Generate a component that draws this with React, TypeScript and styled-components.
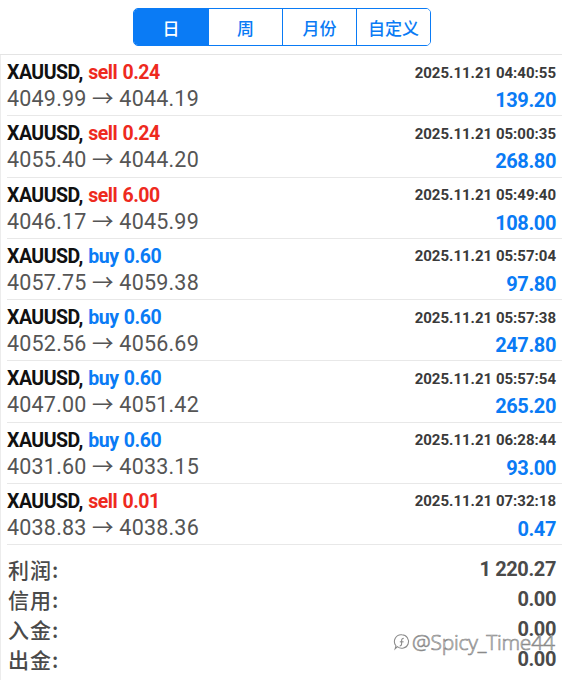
import React, { useState } from 'react'
import styled, { createGlobalStyle } from 'styled-components'

const GlobalStyle = createGlobalStyle`
  html, body {
    margin: 0;
    padding: 0;
    background: #ffffff;
  }
  body {
    font-family: Roboto, 'Noto Sans CJK SC', sans-serif;
    -webkit-font-smoothing: antialiased;
  }
`

const BLUE = '#0a7bf5'
const RED = '#ee2a1e'

const Page = styled.div`
  position: relative;
  width: 562px;
  height: 680px;
  overflow: hidden;
  background: #fff;
`

const Header = styled.header`
  height: 54px;
  display: flex;
  align-items: center;
  justify-content: center;
  border-bottom: 1px solid #e4e4e4;
  padding-left: 2px;
`

const Segmented = styled.div`
  display: grid;
  grid-template-columns: repeat(4, 1fr);
  width: 298px;
  height: 38px;
  box-sizing: border-box;
  border: 1.5px solid ${BLUE};
  border-radius: 5px;
  overflow: hidden;
`

const Segment = styled.button<{ $active: boolean }>`
  border: 0;
  border-left: 1.5px solid ${BLUE};
  &:first-child {
    border-left: 0;
  }
  padding: 0;
  margin: 0;
  background: ${(p) => (p.$active ? BLUE : '#fff')};
  color: ${(p) => (p.$active ? '#fff' : BLUE)};
  font-family: 'Noto Sans CJK SC', sans-serif;
  font-size: 17px;
  font-weight: 500;
  cursor: pointer;
`

const Body = styled.div`
  border-left: 1px solid #ececec;
`

const Row = styled.div`
  height: 61.25px;
  box-sizing: border-box;
  margin-left: 6px;
  padding: 0 6px 0 0;
  border-bottom: 1px solid #e8e8e8;
  display: grid;
  grid-template-columns: 1fr auto;
  grid-template-rows: 29px 28px;
  align-items: end;
`

const Title = styled.div`
  font-size: 19.5px;
  font-weight: 700;
  color: #111;
  letter-spacing: -0.5px;
  word-spacing: 1px;
`

const Side = styled.span<{ $sell: boolean }>`
  color: ${(p) => (p.$sell ? RED : BLUE)};
`

const Time = styled.div`
  font-size: 15px;
  font-weight: 700;
  color: #3a3a3a;
  text-align: right;
  align-self: center;
  padding-top: 6px;
`

const Prices = styled.div`
  font-size: 21.5px;
  color: #555;
  letter-spacing: 0.2px;
`

const Profit = styled.div`
  font-size: 20px;
  font-weight: 700;
  color: ${BLUE};
  text-align: right;
  letter-spacing: -0.4px;
`

const Summary = styled.div`
  padding: 9px 6px 0 7px;
`

const SumRow = styled.div`
  display: flex;
  justify-content: space-between;
  align-items: center;
  height: 30px;
  color: #4a4a4a;
`

const SumLabel = styled.span`
  font-family: 'Noto Sans CJK SC', sans-serif;
  font-size: 21px;
  font-weight: 500;
  letter-spacing: 1px;
`

const SumValue = styled.span`
  font-family: Roboto, sans-serif;
  font-size: 20px;
  font-weight: 700;
  letter-spacing: -0.4px;
`

const Watermark = styled.div`
  position: absolute;
  left: 392px;
  top: 628px;
  display: flex;
  align-items: center;
  gap: 2px;
  white-space: nowrap;
  font-family: 'Open Sans', sans-serif;
  font-size: 21px;
  font-weight: 300;
  color: #fff;
  -webkit-text-stroke: 0.7px #8a8a8a;
  letter-spacing: -0.2px;
  pointer-events: none;
`

type Deal = {
  side: 'sell' | 'buy'
  lots: string
  time: string
  open: string
  close: string
  profit: string
}

const deals: Deal[] = [
  { side: 'sell', lots: '0.24', time: '2025.11.21 04:40:55', open: '4049.99', close: '4044.19', profit: '139.20' },
  { side: 'sell', lots: '0.24', time: '2025.11.21 05:00:35', open: '4055.40', close: '4044.20', profit: '268.80' },
  { side: 'sell', lots: '6.00', time: '2025.11.21 05:49:40', open: '4046.17', close: '4045.99', profit: '108.00' },
  { side: 'buy', lots: '0.60', time: '2025.11.21 05:57:04', open: '4057.75', close: '4059.38', profit: '97.80' },
  { side: 'buy', lots: '0.60', time: '2025.11.21 05:57:38', open: '4052.56', close: '4056.69', profit: '247.80' },
  { side: 'buy', lots: '0.60', time: '2025.11.21 05:57:54', open: '4047.00', close: '4051.42', profit: '265.20' },
  { side: 'buy', lots: '0.60', time: '2025.11.21 06:28:44', open: '4031.60', close: '4033.15', profit: '93.00' },
  { side: 'sell', lots: '0.01', time: '2025.11.21 07:32:18', open: '4038.83', close: '4038.36', profit: '0.47' },
]

const totals = [
  ['利润:', '1 220.27'],
  ['信用:', '0.00'],
  ['入金:', '0.00'],
  ['出金:', '0.00'],
  ['结余:', '1 220.27'],
]

const tabs = ['日', '周', '月份', '自定义']

export default function App() {
  const [tab, setTab] = useState(0)
  return (
    <Page>
      <GlobalStyle />
      <Header>
        <Segmented>
          {tabs.map((t, i) => (
            <Segment key={t} $active={tab === i} onClick={() => setTab(i)}>
              {t}
            </Segment>
          ))}
        </Segmented>
      </Header>
      <Body>
        {deals.map((d) => (
          <Row key={d.time}>
            <Title>
              XAUUSD, <Side $sell={d.side === 'sell'}>{d.side} {d.lots}</Side>
            </Title>
            <Time>{d.time}</Time>
            <Prices>
              {d.open} → {d.close}
            </Prices>
            <Profit>{d.profit}</Profit>
          </Row>
        ))}
        <Summary>
          {totals.map(([label, value]) => (
            <SumRow key={label}>
              <SumLabel>{label}</SumLabel>
              <SumValue>{value}</SumValue>
            </SumRow>
          ))}
        </Summary>
      </Body>
      <Watermark>
        <svg width="18" height="22" viewBox="0 0 20 22" fill="none" stroke="#8a8a8a" strokeWidth="1.2">
          <path d="M11 3a7.5 7.5 0 1 1-5 13.2L3.5 18.5l.9-3.3A7.5 7.5 0 0 1 11 3z" fill="#fff" />
          <path d="M8.5 15.5c1.6 0 2.2-1.1 2.2-2.7V9.2c0-1.4.8-2.2 2.3-2.2" />
          <path d="M8.7 10.8h4.2" />
        </svg>
        <span>@Spicy_Time44</span>
      </Watermark>
    </Page>
  )
}
